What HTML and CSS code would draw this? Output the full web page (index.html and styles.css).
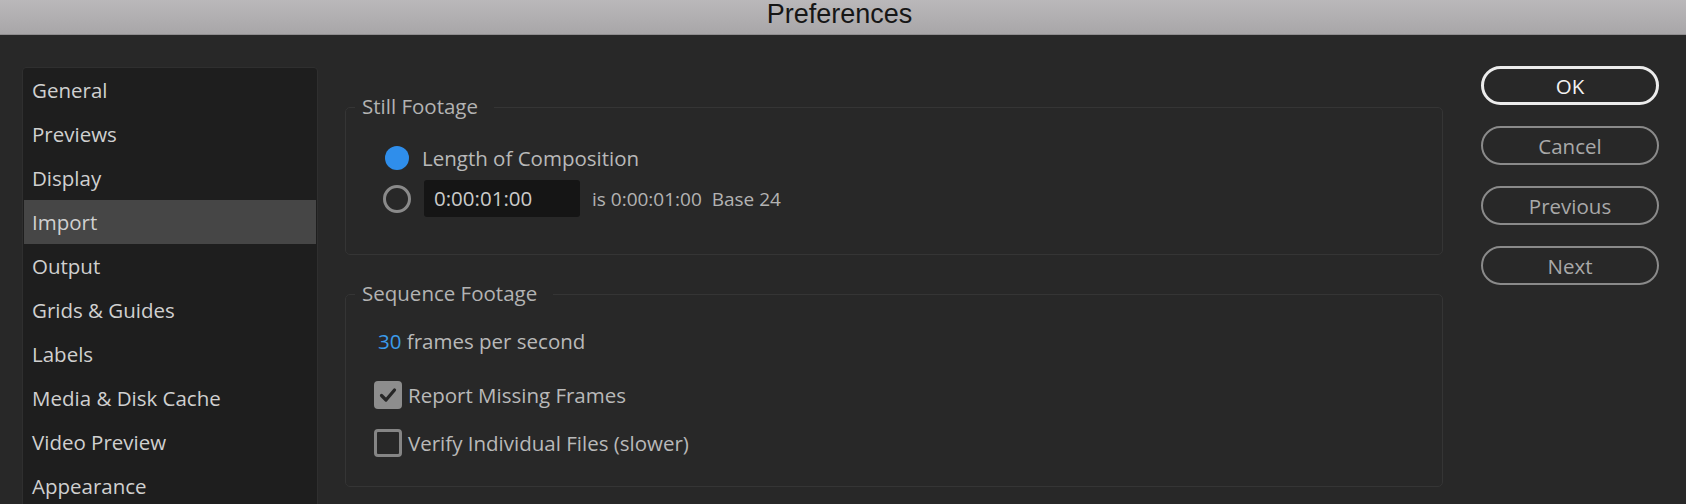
FILE: index.html
```html
<!DOCTYPE html>
<html lang="en">
<head>
<meta charset="utf-8">
<title>Preferences</title>
<link rel="stylesheet" href="styles.css">
</head>
<body>
<div class="titlebar"><span class="title">Preferences</span></div>
<div class="main">
  <nav class="sidebar">
    <div class="item">General</div>
    <div class="item">Previews</div>
    <div class="item">Display</div>
    <div class="item selected">Import</div>
    <div class="item">Output</div>
    <div class="item">Grids &amp; Guides</div>
    <div class="item">Labels</div>
    <div class="item">Media &amp; Disk Cache</div>
    <div class="item">Video Preview</div>
    <div class="item">Appearance</div>
  </nav>
  <div class="content">
    <fieldset class="group still">
      <legend>Still Footage</legend>
      <div class="row row-first">
        <span class="radio-slot"><span class="radio on"></span></span>
        <span class="label">Length of Composition</span>
      </div>
      <div class="row row-second">
        <span class="radio-slot"><span class="radio off"></span></span>
        <span class="timefield">0:00:01:00</span>
        <span class="note">is 0:00:01:00&nbsp;&nbsp;Base 24</span>
      </div>
    </fieldset>
    <fieldset class="group sequence">
      <legend>Sequence Footage</legend>
      <div class="fps"><span class="num">30</span> frames per second</div>
      <div class="check-row first">
        <span class="checkbox checked"><svg viewBox="0 0 28 28" width="28" height="28"><path d="M7.5 14.5 L12 19 L20.5 9" fill="none" stroke="#262626" stroke-width="3.2" stroke-linecap="round" stroke-linejoin="round"/></svg></span>
        <span class="label">Report Missing Frames</span>
      </div>
      <div class="check-row second">
        <span class="checkbox"></span>
        <span class="label">Verify Individual Files (slower)</span>
      </div>
    </fieldset>
  </div>
  <div class="buttons">
    <div class="btn primary">OK</div>
    <div class="btn">Cancel</div>
    <div class="btn">Previous</div>
    <div class="btn">Next</div>
  </div>
</div>
</body>
</html>
```
FILE: styles.css
```css
html, body {
  margin: 0;
  padding: 0;
}
body {
  width: 1686px;
  height: 504px;
  overflow: hidden;
  background: #282828;
  font-family: "Open Sans", "Noto Sans", sans-serif;
  font-size: 20.5px;
  font-weight: 500;
}
.titlebar {
  height: 34px;
  border-bottom: 1px solid #8f8d8f;
  background: linear-gradient(to bottom, #bab8ba 0%, #a8a6a8 100%);
  display: flex;
  justify-content: center;
}
.title {
  font-family: "Liberation Sans", Arial, sans-serif;
  font-size: 27px;
  font-weight: 400;
  line-height: 28px;
  color: #161616;
  margin-right: 7px;
}
.main {
  display: flex;
  align-items: flex-start;
}
.sidebar {
  margin-top: 32px;
  margin-left: 22px;
  width: 292px;
  height: 520px;
  background: #1e1e1e;
  border: 1px solid #2f2f2f;
  border-radius: 4px;
  padding: 0 1px;
}
.item {
  height: 44px;
  line-height: 44px;
  padding-left: 8px;
  color: #d0d0d0;
}
.item.selected {
  background: #464646;
}
.content {
  margin-top: 59px;
  margin-left: 27px;
  width: 1098px;
}
.group {
  margin: 0;
  padding: 0;
  border: 1px solid #353535;
  border-radius: 5px;
  min-width: 0;
}
.group legend {
  margin-left: 9px;
  padding: 0 16px 2px 7px;
  line-height: 24px;
  color: #b3b3b3;
}
.still {
  padding-top: 25px;
  padding-bottom: 37px;
}
.row {
  display: flex;
  align-items: center;
  padding-left: 37px;
  color: #b9b9b9;
}
.row-first {
  height: 26px;
}
.row-second {
  height: 37px;
  margin-top: 9px;
}
.radio-slot {
  width: 28px;
  height: 28px;
  display: flex;
  align-items: center;
  justify-content: center;
}
.radio {
  border-radius: 50%;
  box-sizing: border-box;
}
.radio.on {
  width: 24px;
  height: 24px;
  background: #2f8eeb;
}
.radio.off {
  width: 28px;
  height: 28px;
  border: 3.5px solid #8a8a8a;
}
.row-first .label {
  margin-left: 11px;
}
.timefield {
  margin-left: 13px;
  width: 156px;
  height: 37px;
  box-sizing: border-box;
  padding-left: 10px;
  line-height: 37px;
  background: #151515;
  border-radius: 3px;
  color: #cbcbcb;
}
.note {
  margin-left: 12px;
  font-size: 19px;
  color: #b3b3b3;
}
.sequence {
  margin-top: 26px;
  padding-top: 21px;
  padding-bottom: 29px;
}
.fps {
  padding-left: 32px;
  line-height: 26px;
  height: 26px;
  color: #b9b9b9;
}
.fps .num {
  color: #3b9bea;
}
.check-row {
  display: flex;
  align-items: center;
  height: 28px;
  padding-left: 28px;
  color: #b9b9b9;
}
.check-row.first {
  margin-top: 27px;
}
.check-row.second {
  margin-top: 20px;
}
.check-row .label {
  margin-left: 6px;
}
.checkbox {
  width: 28px;
  height: 28px;
  box-sizing: border-box;
  border: 3px solid #858585;
  border-radius: 4px;
  display: block;
}
.checkbox.checked {
  border: none;
  background: #8d8d8d;
}
.checkbox svg {
  display: block;
}
.buttons {
  margin-top: 31px;
  margin-left: 38px;
  display: flex;
  flex-direction: column;
  gap: 21px;
}
.btn {
  width: 178px;
  height: 39px;
  box-sizing: border-box;
  border: 2.5px solid #8a8a8a;
  border-radius: 20px;
  display: flex;
  align-items: center;
  justify-content: center;
  color: #a9a9a9;
}
.btn.primary {
  border: 3px solid #ececec;
  color: #f2f2f2;
}
```
